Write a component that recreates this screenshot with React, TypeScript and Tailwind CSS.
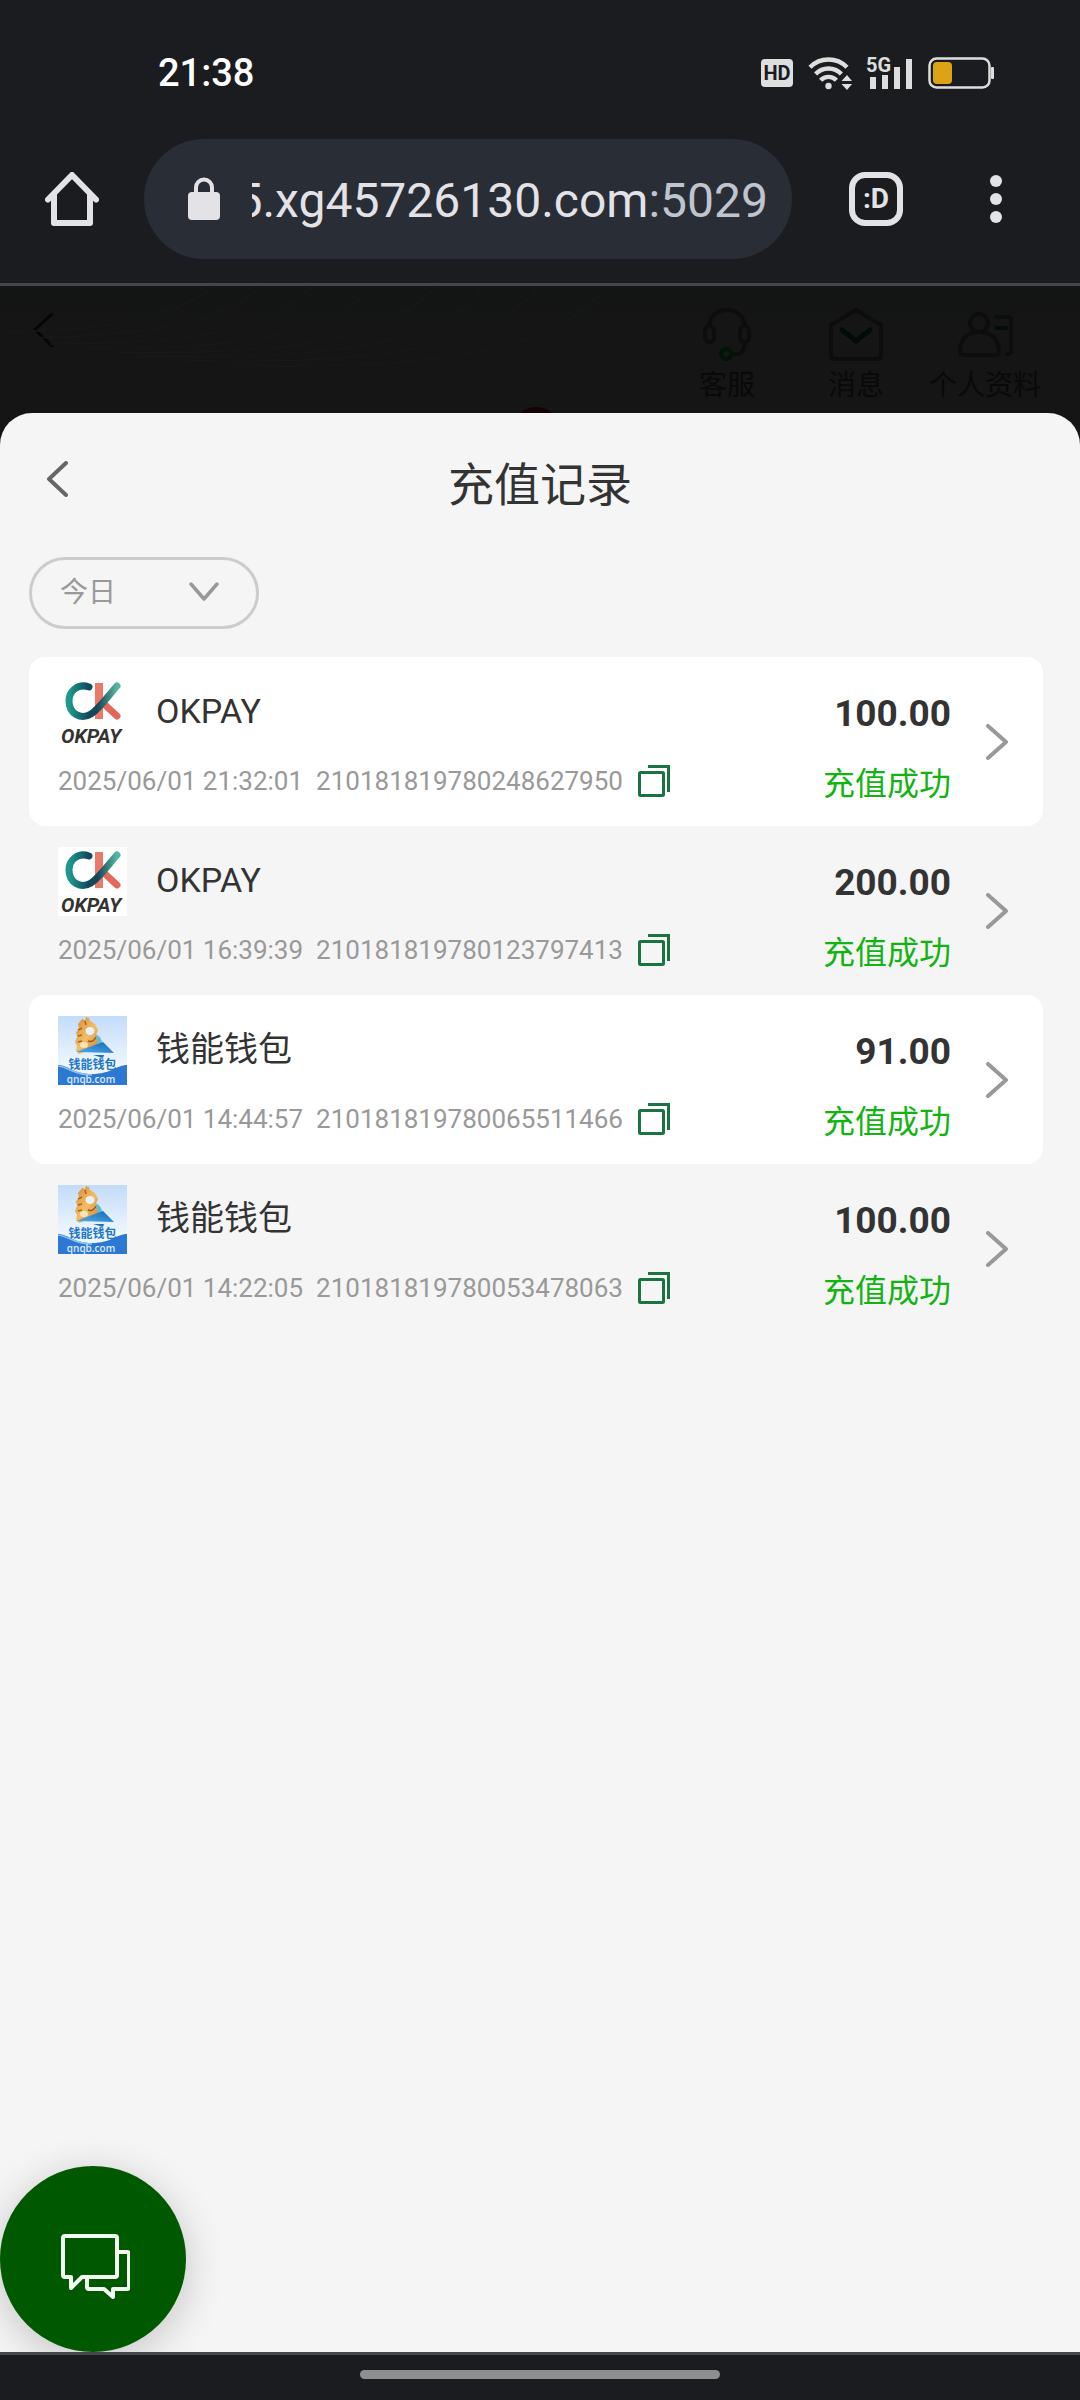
import { useState } from "react";

type Wallet = "okpay" | "qnqb";

interface RecordItem {
  wallet: Wallet;
  name: string;
  time: string;
  orderNo: string;
  amount: string;
}

const records: RecordItem[] = [
  { wallet: "okpay", name: "OKPAY", time: "2025/06/01 21:32:01", orderNo: "210181819780248627950", amount: "100.00" },
  { wallet: "okpay", name: "OKPAY", time: "2025/06/01 16:39:39", orderNo: "210181819780123797413", amount: "200.00" },
  { wallet: "qnqb", name: "钱能钱包", time: "2025/06/01 14:44:57", orderNo: "210181819780065511466", amount: "91.00" },
  { wallet: "qnqb", name: "钱能钱包", time: "2025/06/01 14:22:05", orderNo: "210181819780053478063", amount: "100.00" },
];

function StatusBar() {
  return (
    <div className="flex h-[139px] items-center justify-between pt-1.5 pr-[86px] pl-[158px]">
      <span className="text-[38px] leading-none font-medium text-white">21:38</span>
      <div className="flex items-center gap-[15px]">
        <span className="flex h-7 w-8 items-center justify-center rounded bg-[#dedede] text-[20px] leading-none font-bold text-[#1b1c1f]">
          HD
        </span>
        <svg width="44" height="36" viewBox="0 0 44 36" fill="none" stroke="#dedede" strokeWidth="4.4">
          <path d="M2 12.200a26 26 0 0 1 37 0" />
          <path d="M7.600 19a18 18 0 0 1 25.800 0" />
          <path d="M12.600 25.200a11 11 0 0 1 15.800 0" />
          <circle cx="20.500" cy="31" r="3.200" fill="#dedede" stroke="none" />
          <path d="M33.500 26l5.500-6 5 6zM33.500 29l5.500 6 5-6z" fill="#dedede" stroke="none" />
        </svg>
        <svg className="overflow-visible" width="46" height="36" viewBox="0 0 46 36" fill="#dedede">
          <text x="-1" y="17" fontFamily="Roboto" fontSize="20" fontWeight="700">5G</text>
          <rect x="3" y="22" width="6" height="12" />
          <rect x="15" y="20" width="6" height="14" />
          <rect x="27" y="12" width="6" height="22" />
          <rect x="39" y="4" width="6" height="30" />
        </svg>
        <svg width="66" height="32" viewBox="0 0 66 32" fill="none">
          <rect x="1.500" y="1.500" width="60" height="29" rx="7" stroke="#dedede" strokeWidth="2.500" />
          <rect x="5" y="5" width="19" height="22" rx="4" fill="#dba315" />
          <rect x="63" y="10" width="3" height="12" rx="1" fill="#dedede" />
        </svg>
      </div>
    </div>
  );
}

function AddressBar() {
  return (
    <div className="flex items-center pb-6">
      <button type="button" aria-label="主页" className="flex w-36 justify-center">
        <svg width="54" height="54" viewBox="0 0 54 54" fill="none" stroke="#e3e2e6" strokeWidth="6" strokeLinecap="round" strokeLinejoin="round">
          <path d="M3 27.500 27 3l24 24.500" />
          <path d="M9 23v28h36V23" />
        </svg>
      </button>
      <button type="button" className="flex h-[120px] min-w-0 flex-1 items-center gap-8 rounded-full bg-[#292d36] pr-6 pl-11">
        <svg className="shrink-0" width="32" height="44" viewBox="0 0 32 44" fill="none">
          <rect x="0" y="15" width="32" height="28" rx="4" fill="#e3e2e6" />
          <path d="M8 16v-5.500a8 8 0 0 1 16 0V16" stroke="#e3e2e6" strokeWidth="4" />
        </svg>
        <span className="flex min-w-0 flex-1 justify-end overflow-hidden pt-1 text-[48px] leading-[64px] whitespace-nowrap text-[#e3e2e6]">
          5.xg45726130.com<span className="text-[#c0c4cf]">:5029</span>
        </span>
      </button>
      <button type="button" aria-label="标签页" className="ml-[57px] flex size-[54px] items-center justify-center rounded-2xl border-6 border-[#e3e2e6] text-[28px] leading-none font-bold text-[#e3e2e6]">
        :D
      </button>
      <button type="button" aria-label="更多" className="mr-12 ml-[57px] flex w-[72px] flex-col items-center gap-1.5">
        <span className="size-3 rounded-full bg-[#e3e2e6]" />
        <span className="size-3 rounded-full bg-[#e3e2e6]" />
        <span className="size-3 rounded-full bg-[#e3e2e6]" />
      </button>
    </div>
  );
}

// page under the overlay
function DimmedHeader() {
  const item = "flex flex-col items-center gap-1.5 text-[28px] leading-9 text-[#090909]";
  return (
    <header className="relative flex h-[127px] items-start justify-between overflow-hidden bg-linear-to-b from-[#121513] to-[#151515] to-40% pt-5 pr-[39px] pl-8">
      <svg className="absolute top-0 left-0" width="620" height="127" viewBox="0 0 620 127" fill="none" stroke="#161917" strokeWidth="1.500">
        <path d="M0 46C90 44 160 40 215 0M20 52C140 50 220 40 262 0M50 58C190 58 270 46 312 0M80 62C240 64 330 50 372 0M110 66C290 70 390 54 436 0M140 70C340 74 440 58 486 0M180 74C380 80 490 62 540 0M230 80C430 84 560 66 606 0" />
      </svg>
      <button type="button" aria-label="返回" className="mt-1.5">
        <svg width="22" height="36" viewBox="0 0 22 36" fill="none" stroke="#060606" strokeWidth="3" strokeLinecap="round">
          <path d="M20 2 3 17.500 20 34" />
        </svg>
      </button>
      <div className="flex">
        <a href="#service" className={item}>
          <svg width="56" height="56" viewBox="0 0 56 56" fill="none" stroke="#0d0d0d" strokeWidth="4">
            <path d="M10 21C11 10 18 4 28 4s17 6 18 17" />
            <rect x="6" y="20" width="9" height="16" rx="4.500" />
            <rect x="41" y="20" width="9" height="16" rx="4.500" />
            <path d="M46 37c-1 7-4 11-8 11h-5" />
            <circle cx="27" cy="48" r="5" stroke="#001408" />
          </svg>
          客服
        </a>
        <a href="#message" className={`${item} ml-[73px]`}>
          <svg width="56" height="56" viewBox="0 0 56 56" fill="none" stroke="#0d0d0d" strokeWidth="4" strokeLinejoin="round" strokeLinecap="round">
            <path d="M3 19 28 4l25 15v30q0 4-4 4H7q-4 0-4-4z" />
            <path d="m14 24 14 11 14-11" stroke="#000c05" strokeWidth="5" />
          </svg>
          消息
        </a>
        <a href="#profile" className={`${item} ml-[45px]`}>
          <svg width="58" height="56" viewBox="0 0 58 56" fill="none" stroke="#0d0d0d" strokeWidth="4" strokeLinecap="round" strokeLinejoin="round">
            <circle cx="23" cy="17" r="9" />
            <path d="M4 46c0-13 7-20 19-20s20 7 20 20q0 3-3 3H7q-3 0-3-3z" />
            <path d="M40 11h12q3 0 3 3v31q0 3-4 3" />
            <path d="M41 22h9" stroke="#000c05" />
          </svg>
          个人资料
        </a>
      </div>
      <span className="absolute -bottom-[42px] left-1/2 size-12 -translate-x-7 rounded-full bg-[#140002]" />
    </header>
  );
}

function OkpayLogo() {
  return (
    <svg className="size-[69px] shrink-0 overflow-visible" viewBox="0 0 69 69" role="img" aria-label="OKPAY">
      <defs>
        <linearGradient id="okTeal" x1="0" y1="0" x2="1" y2="0">
          <stop offset="0" stopColor="#1d9a8c" />
          <stop offset=".4" stopColor="#124a5e" />
          <stop offset=".6" stopColor="#17465a" />
          <stop offset="1" stopColor="#55b7a2" />
        </linearGradient>
      </defs>
      <rect width="69" height="69" fill="#fff" />
      <g fill="none" strokeLinecap="round" strokeWidth="7">
        <path d="M41 5v36" stroke="#ea7a68" strokeLinecap="butt" strokeWidth="8" />
        <path d="M46 26l13 12" stroke="#e2685a" />
        <path d="M31 9C20 5 11 13 11 23c0 13 12 19 22 13 8-5 17-18 26-28" stroke="url(#okTeal)" />
      </g>
      <text x="3" y="65" fontFamily="Roboto" fontSize="20" fontWeight="700" fontStyle="italic" fill="#333">
        OKPAY
      </text>
    </svg>
  );
}

function QnqbLogo() {
  return (
    <svg className="size-[69px] shrink-0" viewBox="0 0 69 69" role="img" aria-label="钱能钱包">
      <defs>
        <linearGradient id="qnSky" x1="0" y1="0" x2="0" y2="1">
          <stop offset="0" stopColor="#c3dcfa" />
          <stop offset=".7" stopColor="#eef6fe" />
        </linearGradient>
        <linearGradient id="qnGold" x1="0" y1="0" x2="1" y2="1">
          <stop offset="0" stopColor="#d88a30" />
          <stop offset=".5" stopColor="#f3bd68" />
          <stop offset="1" stopColor="#c97b28" />
        </linearGradient>
        <linearGradient id="qnSail" x1="0" y1="1" x2="1" y2="0">
          <stop offset="0" stopColor="#4fb0e6" />
          <stop offset="1" stopColor="#1764b8" />
        </linearGradient>
      </defs>
      <rect width="69" height="69" fill="url(#qnSky)" />
      <path d="M24 3l3 1 1-3 3 1 1 3 5 3 3 6-2 5 4 5 1 6-22 8-3-3 1-5-2-4 2-5-1-5 3-3-1-5z" fill="url(#qnGold)" />
      <path d="M20 14l4-2M20 20l4-1M20 26l4-1M27 5l1 4" stroke="#a86420" strokeWidth="1.500" />
      <ellipse cx="32" cy="15" rx="4.500" ry="4" fill="#e9f0f6" />
      <ellipse cx="26" cy="29" rx="4" ry="3" fill="#fae3b6" />
      <path d="M30 25q5 2 8-4" stroke="#9c5b1d" strokeWidth="1.500" fill="none" />
      <path d="M37 18q8 3 7 11l-6 2q3-6-1-13z" fill="#5cc0dd" />
      <path d="M18 36 45 26l11 11z" fill="url(#qnSail)" />
      <path d="M35 39h11l-1 3z" fill="#1e6fc4" />
      <path d="M0 49c10 0 15 9 34 9s25-9 35-9v20H0z" fill="#2d78d2" />
      <path d="M0 50c10 1 16 9 34 9" stroke="#8cc3f4" strokeWidth="1.500" fill="none" />
      <text x="34.500" y="53" textAnchor="middle" fontFamily="Noto Sans CJK SC" fontSize="12" fontWeight="700" fill="#1f77c9">
        钱能钱包
      </text>
      <text x="33" y="67" textAnchor="middle" fontFamily="Open Sans" fontSize="10" fontWeight="600" fill="#dcebfc">
        qnqb.com
      </text>
    </svg>
  );
}

function CopyIcon() {
  return (
    <svg width="32" height="32" viewBox="0 0 32 32" fill="none" stroke="#1a7340" strokeWidth="3">
      <rect x="1.500" y="7.500" width="24" height="23" rx="1" />
      <path d="M10 1.500h20.500V27" />
    </svg>
  );
}

function RecordRow({ item }: { item: RecordItem }) {
  return (
    <li className="flex h-[169px] items-center rounded-2xl pr-8 pl-[29px] odd:bg-white">
      <div className="min-w-0 flex-1 pb-1.5">
        <div className="flex items-center gap-[29px]">
          {item.wallet === "okpay" ? <OkpayLogo /> : <QnqbLogo />}
          <span className="pb-1 text-[34px] leading-[48px] text-[#333]">{item.name}</span>
        </div>
        <div className="mt-4 flex items-center text-[26px] leading-9 text-[#999]">
          <time>{item.time}</time>
          <span className="ml-[13px]">{item.orderNo}</span>
          <button type="button" aria-label="复制" className="ml-[15px]">
            <CopyIcon />
          </button>
        </div>
      </div>
      <div className="flex flex-col items-end gap-6 pt-3">
        <span className="text-[37px] leading-[48px] font-bold text-[#333]">{item.amount}</span>
        <span className="text-[32px] leading-[44px] text-[#12b312]">充值成功</span>
      </div>
      <button type="button" aria-label="详情" className="ml-[34px]">
        <svg width="26" height="36" viewBox="0 0 26 36" fill="none" stroke="#999" strokeWidth="4" strokeLinecap="round" strokeLinejoin="round">
          <path d="M3 2l18 16L3 34" />
        </svg>
      </button>
    </li>
  );
}

export default function App() {
  const [range, setRange] = useState("today");

  return (
    <div className="flex min-h-screen flex-col bg-[#1b1c1f] font-['Roboto','Noto_Sans_CJK_SC',sans-serif]">
      <StatusBar />
      <AddressBar />
      <div className="flex flex-1 flex-col border-y-3 border-[#45474b] bg-[#151515]">
        <DimmedHeader />
        <main className="relative flex-1 overflow-hidden rounded-t-[32px] bg-[#f5f5f5]">
          <div className="grid h-36 grid-cols-[1fr_auto_1fr] items-center px-[45px]">
            <button type="button" aria-label="返回" className="mb-3 justify-self-start">
              <svg width="24" height="36" viewBox="0 0 24 36" fill="none" stroke="#666" strokeWidth="4" strokeLinecap="round" strokeLinejoin="round">
                <path d="M21 2 4 18l17 16" />
              </svg>
            </button>
            <h1 className="text-[46px] leading-[64px] text-[#333]">充值记录</h1>
          </div>

          <div className="relative ml-[29px] w-[230px]">
            <select
              aria-label="日期"
              value={range}
              onChange={(e) => setRange(e.target.value)}
              className="h-[72px] w-full appearance-none rounded-full border-3 border-[#ccc] bg-transparent pl-7 text-[28px] leading-9 text-[#999]"
            >
              <option value="today">今日</option>
              <option value="yesterday">昨日</option>
              <option value="week">近7日</option>
            </select>
            <svg className="pointer-events-none absolute top-6 right-10" width="30" height="22" viewBox="0 0 30 22" fill="none" stroke="#999" strokeWidth="3.500" strokeLinecap="round" strokeLinejoin="round">
              <path d="m2 3 13 15L28 3" />
            </svg>
          </div>

          <ul className="mt-7 mr-[37px] ml-[29px]">
            {records.map((item) => (
              <RecordRow key={item.orderNo} item={item} />
            ))}
          </ul>

          <button
            type="button"
            aria-label="在线客服"
            className="absolute bottom-0 left-0 flex size-[186px] items-center justify-center rounded-full bg-[#005800] pt-3.5 pl-1 shadow-[0_8px_40px_rgba(0,0,0,0.2)]"
          >
            <svg width="70" height="66" viewBox="0 0 70 66" fill="none" stroke="#f2faf2" strokeWidth="4" strokeLinejoin="round">
              <path d="M5 3h50q2 0 2 2v37q0 2-2 2H22L11 55V44H5q-2 0-2-2V5q0-2 2-2z" />
              <path d="M57 19h10q2 0 2 2v33q0 2-2 2H53v8l-9-8H29q-2 0-2-2V44" />
            </svg>
          </button>
        </main>
      </div>
      <div className="flex h-[45px] justify-center pt-[15px]">
        <span className="h-[9px] w-1/3 rounded-full bg-[#8d8e90]" />
      </div>
    </div>
  );
}
